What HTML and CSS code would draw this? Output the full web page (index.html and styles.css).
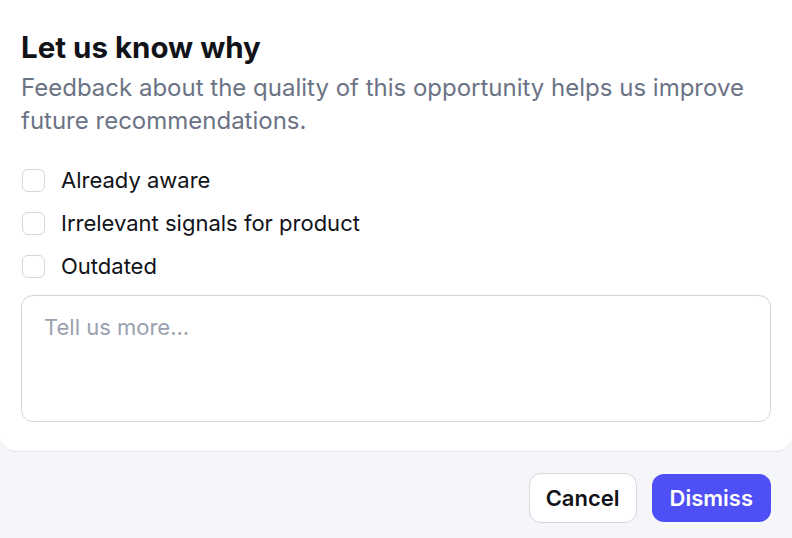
FILE: index.html
```html
<!DOCTYPE html>
<html lang="en">
<head>
    <meta charset="UTF-8">
    <meta name="viewport" content="width=device-width, initial-scale=1.0">
    <title>Let us know why</title>
    <link rel="stylesheet" href="styles.css">
</head>
<body>

    <div class="dialog">
        <div class="panel">
            <h1>Let us know why</h1>
            <p class="lead">Feedback about the quality of this opportunity helps us improve future recommendations.</p>

            <div class="reasons">
                <label class="reason"><input type="checkbox"><span>Already aware</span></label>
                <label class="reason"><input type="checkbox"><span>Irrelevant signals for product</span></label>
                <label class="reason"><input type="checkbox"><span>Outdated</span></label>
            </div>

            <textarea class="more" placeholder="Tell us more..."></textarea>
        </div>

        <div class="footer">
            <button class="btn btn-cancel">Cancel</button>
            <button class="btn btn-dismiss">Dismiss</button>
        </div>
    </div>

</body>
</html>
```

FILE: styles.css
```css
body {
    margin: 0;
    padding: 0;
    font-family: Inter, "Noto Sans", sans-serif;
    background-color: #f5f6fa;
    color: #111318;
}

.dialog {
    width: 792px;
    height: 538px;
    display: flex;
    flex-direction: column;
}

.panel {
    background: #ffffff;
    border-bottom: 1px solid #e3e5eb;
    border-radius: 0 0 16px 16px;
    padding: 30px 21px 29px 21px;
}

h1 {
    margin: 0;
    font-size: 29.5px;
    font-weight: 700;
    line-height: 34px;
}

.lead {
    margin: 7px 0 0 0;
    font-size: 24px;
    line-height: 33px;
    color: #6b7385;
}

.reasons {
    margin-top: 25px;
    display: flex;
    flex-direction: column;
    gap: 7px;
}

.reason {
    display: flex;
    align-items: center;
    gap: 16px;
    height: 36px;
    font-size: 22px;
}

.reason input {
    appearance: none;
    margin: 0 0 0 1px;
    width: 23px;
    height: 23px;
    border: 1px solid #d3d6de;
    border-radius: 6px;
    background: #ffffff;
}

.more {
    display: block;
    box-sizing: border-box;
    width: 750px;
    height: 127px;
    margin-top: 11px;
    padding: 18px 22px;
    border: 1px solid #d3d5de;
    border-radius: 12px;
    font-family: inherit;
    font-size: 22px;
    resize: none;
}

.more::placeholder {
    color: #9aa1af;
}

.footer {
    flex: 1;
    display: flex;
    justify-content: flex-end;
    align-items: center;
    gap: 15px;
    padding: 6px 21px 0 0;
}

.btn {
    height: 50px;
    padding: 0 18px;
    border-radius: 12px;
    font-family: inherit;
    font-size: 22px;
    font-weight: 600;
    cursor: pointer;
}

.btn-cancel {
    padding: 0 16px;
    background: #ffffff;
    border: 1px solid #d6d8de;
    color: #111318;
}

.btn-dismiss {
    height: 48px;
    background: #4f4ff6;
    border: none;
    color: #ffffff;
}
```
